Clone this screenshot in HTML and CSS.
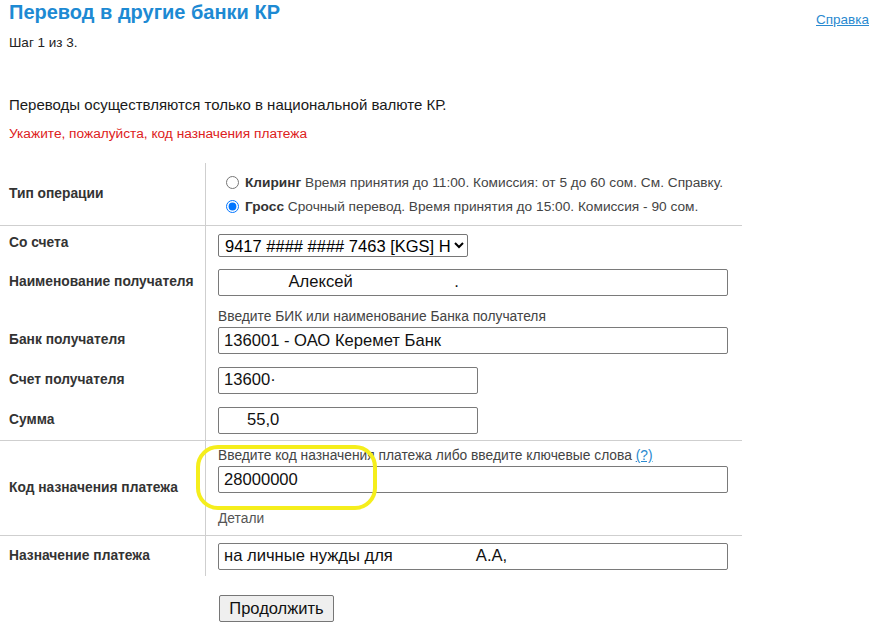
FILE: index.html
```html
<!DOCTYPE html>
<html lang="ru">
<head>
<meta charset="utf-8">
<title>Перевод в другие банки КР</title>
<link rel="stylesheet" href="styles.css">
</head>
<body>
<div class="page">
  <div class="header">
    <h1 class="title">Перевод в другие банки КР</h1>
    <a class="help" href="#">Справка</a>
  </div>
  <div class="step">Шаг 1 из 3.</div>
  <p class="note">Переводы осуществляются только в национальной валюте КР.</p>
  <p class="error">Укажите, пожалуйста, код назначения платежа</p>

  <div class="form">
    <div class="section sec-type">
      <div class="label center">Тип операции</div>
      <div class="field radios">
        <label class="radio"><input type="radio" name="t"><b>Клиринг</b>&nbsp;Время принятия до 11:00. Комиссия: от 5 до 60 сом. См. Справку.</label>
        <label class="radio"><input type="radio" name="t" checked><b>Гросс</b>&nbsp;Срочный перевод. Время принятия до 15:00. Комиссия - 90 сом.</label>
      </div>
    </div>

    <div class="section sec-main">
      <div class="row row-select">
        <div class="label">Со счета</div>
        <div class="field"><select class="sel"><option>9417 #### #### 7463 [KGS] Некрасов</option></select></div>
      </div>
      <div class="row">
        <div class="label">Наименование получателя</div>
        <div class="field"><input class="inp wide" type="text" value="              Алексей                      ."></div>
      </div>
      <div class="row row-hint">
        <div class="label bottom">Банк получателя</div>
        <div class="field">
          <div class="hint">Введите БИК или наименование Банка получателя</div>
          <input class="inp wide" type="text" value="136001 - ОАО Керемет Банк">
        </div>
      </div>
      <div class="row">
        <div class="label">Счет получателя</div>
        <div class="field"><input class="inp short" type="text" value="13600·"></div>
      </div>
      <div class="row">
        <div class="label">Сумма</div>
        <div class="field"><input class="inp short" type="text" value="     55,0"></div>
      </div>
    </div>

    <div class="section sec-code">
      <div class="label center">Код назначения платежа</div>
      <div class="field code">
        <div class="hint">Введите код назначения платежа либо введите ключевые слова <a class="q" href="#">(?)</a></div>
        <input class="inp wide" type="text" value="28000000">
        <div class="details">Детали</div>
      </div>
    </div>

    <div class="section sec-last">
      <div class="row">
        <div class="label">Назначение платежа</div>
        <div class="field"><input class="inp wide" type="text" value="на личные нужды для                  А.А,"></div>
      </div>
    </div>
  </div>

  <div class="actions"><button class="btn" type="button">Продолжить</button></div>

  <div class="marker"></div>
</div>
</body>
</html>
```
FILE: styles.css
```css
html, body {
  margin: 0;
  padding: 0;
  background: #fff;
}
body {
  font-family: "Liberation Sans", Arial, sans-serif;
  color: #222;
  font-size: 13px;
}
.page {
  position: relative;
  width: 869px;
  height: 638px;
  overflow: hidden;
}
.header {
  display: flex;
  justify-content: space-between;
  align-items: flex-start;
  height: 24px;
  padding-left: 9px;
  padding-right: 0;
}
.title {
  margin: 0;
  font-size: 20px;
  line-height: 24px;
  font-weight: bold;
  color: #1d8ad3;
}
.help {
  margin-top: 12px;
  font-size: 13.5px;
  line-height: 16px;
  color: #2a8ad0;
  text-decoration: underline;
}
.step {
  margin-top: 11px;
  padding-left: 9px;
  font-size: 13.5px;
  line-height: 16px;
  color: #222;
}
.note {
  margin: 45px 0 0;
  padding-left: 9px;
  font-size: 15px;
  line-height: 18px;
  color: #1a1a1a;
}
.error {
  margin: 12px 0 0;
  padding-left: 9px;
  font-size: 13.7px;
  line-height: 16px;
  color: #dd2121;
}
.form {
  margin-top: 21px;
  width: 742px;
}
.section {
  display: grid;
  grid-template-columns: 206px 1fr;
  border-bottom: 1px solid #cfcfcf;
}
.sec-main, .sec-last {
  display: block;
}
.sec-last {
  border-bottom: none;
}
.row {
  display: grid;
  grid-template-columns: 206px 1fr;
  min-height: 40px;
}
.row-select {
  min-height: 36px;
}
.label {
  border-right: 1px solid #cfcfcf;
  padding-left: 9px;
  font-weight: bold;
  font-size: 13.8px;
  line-height: 16px;
  color: #333;
  display: flex;
  align-items: center;
}
.label.bottom {
  align-items: flex-end;
  padding-bottom: 12px;
}
.row-select .label {
  align-items: flex-start;
  padding-top: 9px;
}
.field {
  padding-left: 12px;
  display: flex;
  flex-direction: column;
  justify-content: center;
}
.row-select .field {
  justify-content: flex-start;
  padding-top: 8px;
}
.radios {
  padding-top: 7px;
  padding-bottom: 7px;
}
.radio {
  display: flex;
  align-items: center;
  height: 24px;
  font-size: 13.7px;
  color: #444;
}
.radio b {
  color: #333;
}
.radio input {
  margin: 0 6px 0 8px;
  width: 13px;
  height: 13px;
}
.sel {
  width: 250px;
  height: 23px;
  font-family: "Liberation Sans", Arial, sans-serif;
  font-size: 16.5px;
  color: #000;
  border: 1px solid #767676;
  border-radius: 2px;
  background: #fff;
  padding: 0 0 0 2px;
}
.inp {
  box-sizing: border-box;
  height: 27px;
  border: 1px solid #7a7a7a;
  border-radius: 2px;
  padding: 0 5px;
  font-family: "Liberation Sans", Arial, sans-serif;
  font-size: 16.6px;
  color: #111;
  background: #fff;
  outline: none;
}
.wide {
  width: 510px;
}
.short {
  width: 260px;
}
.row-hint {
  min-height: 58px;
}
.row-hint .field {
  padding-top: 7px;
  padding-bottom: 6px;
  justify-content: flex-start;
}
.hint {
  font-size: 13.8px;
  line-height: 16px;
  color: #444;
  margin-bottom: 2px;
}
.q {
  color: #2a8ad0;
  text-decoration: underline;
}
.code {
  padding-top: 7px;
  padding-bottom: 8px;
  justify-content: flex-start;
}
.details {
  margin-top: 18px;
  font-size: 13.8px;
  line-height: 16px;
  color: #555;
}
.actions {
  margin-top: 19px;
  padding-left: 219px;
}
.btn {
  box-sizing: border-box;
  width: 115px;
  height: 27px;
  font-family: "Liberation Sans", Arial, sans-serif;
  font-size: 16.5px;
  color: #111;
  background: #efefef;
  border: 1px solid #767676;
  border-radius: 2px;
  padding: 0;
}
.marker {
  position: absolute;
  left: 196px;
  top: 445px;
  width: 181px;
  height: 65px;
  box-sizing: border-box;
  border: 4px solid #f5ee1c;
  border-radius: 22px;
  pointer-events: none;
}
```
